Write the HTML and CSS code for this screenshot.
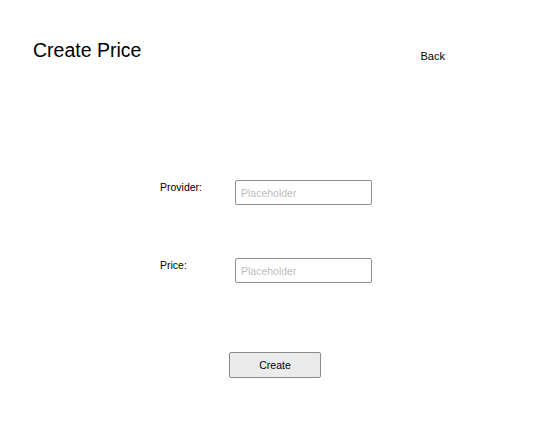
FILE: index.html
```html
<!DOCTYPE html>
<html lang="en">
<head>
<meta charset="utf-8">
<title>Create Price</title>
<link rel="stylesheet" href="styles.css">
</head>
<body>
<div class="page">
  <header class="header">
    <h1 class="title">Create Price</h1>
    <a class="back" href="#">Back</a>
  </header>
  <form class="form">
    <div class="fields">
      <label class="label" for="provider">Provider:</label>
      <input class="input" id="provider" type="text" placeholder="Placeholder">
      <label class="label" for="price">Price:</label>
      <input class="input" id="price" type="text" placeholder="Placeholder">
    </div>
    <button class="button" type="button">Create</button>
  </form>
</div>
</body>
</html>
```

FILE: styles.css
```css
html, body {
  margin: 0;
  padding: 0;
  background: #ffffff;
}

body {
  font-family: "Liberation Sans", Arial, sans-serif;
  color: #000;
}

.page {
  width: 535px;
  height: 424px;
  box-sizing: border-box;
  padding-top: 39px;
}

.header {
  display: flex;
  justify-content: space-between;
  align-items: flex-start;
  padding: 0 90px 0 33px;
}

.title {
  margin: 0;
  font-size: 19.5px;
  font-weight: normal;
  line-height: 22px;
}

.back {
  margin-top: 11px;
  font-size: 11px;
  line-height: 13px;
  color: #000;
  text-decoration: none;
}

.form {
  display: flex;
  flex-direction: column;
  align-items: flex-start;
  margin-top: 117px;
}

.fields {
  display: grid;
  grid-template-columns: 75px 137px;
  row-gap: 53px;
  margin-left: 160px;
}

.label {
  font-size: 10.5px;
  line-height: 12px;
  padding-top: 1px;
}

.input {
  box-sizing: border-box;
  width: 137px;
  height: 25px;
  margin: 0;
  padding: 0 5px;
  border: 1px solid #8f8f8f;
  border-radius: 2px;
  font-family: "Liberation Sans", Arial, sans-serif;
  font-size: 10.5px;
  color: #000;
  background: #fff;
  outline: none;
}

.input::placeholder {
  color: #bdbdbd;
}

.button {
  box-sizing: border-box;
  width: 92px;
  height: 26px;
  margin: 69px 0 0 229px;
  padding: 0;
  border: 1px solid #8a8a8a;
  border-radius: 2px;
  background: #ebebeb;
  font-family: "Liberation Sans", Arial, sans-serif;
  font-size: 10.5px;
  color: #000;
}
```
